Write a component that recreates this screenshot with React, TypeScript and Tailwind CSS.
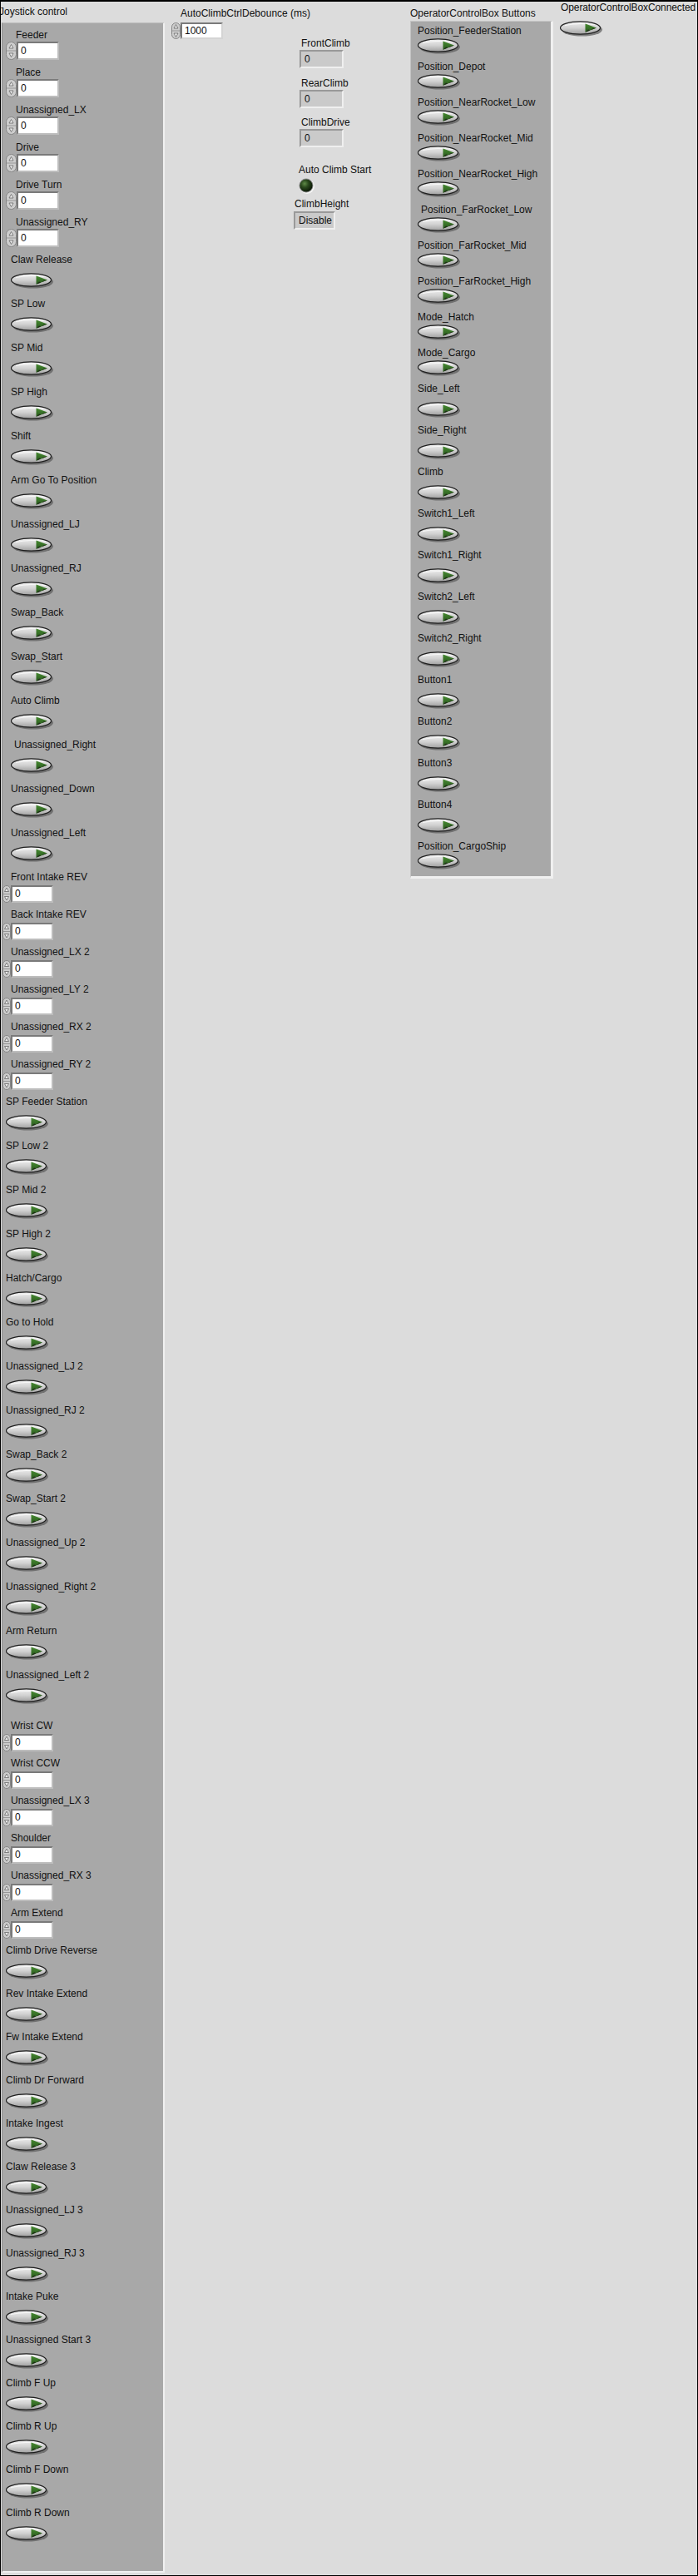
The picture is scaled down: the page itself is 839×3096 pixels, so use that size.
const g1 = ['Feeder', 'Place', 'Unassigned_LX', 'Drive', 'Drive Turn', 'Unassigned_RY'];
const g2 = ['Claw Release', 'SP Low', 'SP Mid', 'SP High', 'Shift', 'Arm Go To Position', 'Unassigned_LJ', 'Unassigned_RJ', 'Swap_Back', 'Swap_Start', 'Auto Climb', 'Unassigned_Right', 'Unassigned_Down', 'Unassigned_Left'];
const g3 = ['Front Intake REV', 'Back Intake REV', 'Unassigned_LX 2', 'Unassigned_LY 2', 'Unassigned_RX 2', 'Unassigned_RY 2'];
const g4 = ['SP Feeder Station', 'SP Low 2', 'SP Mid 2', 'SP High 2', 'Hatch/Cargo', 'Go to Hold', 'Unassigned_LJ 2', 'Unassigned_RJ 2', 'Swap_Back 2', 'Swap_Start 2', 'Unassigned_Up 2', 'Unassigned_Right 2', 'Arm Return', 'Unassigned_Left 2'];
const g5 = ['Wrist CW', 'Wrist CCW', 'Unassigned_LX 3', 'Shoulder', 'Unassigned_RX 3', 'Arm Extend'];
const g6 = ['Climb Drive Reverse', 'Rev Intake Extend', 'Fw Intake Extend', 'Climb Dr Forward', 'Intake Ingest', 'Claw Release 3', 'Unassigned_LJ 3', 'Unassigned_RJ 3', 'Intake Puke', 'Unassigned Start 3', 'Climb F Up', 'Climb R Up', 'Climb F Down', 'Climb R Down'];

const tight = ['Position_FeederStation', 'Position_Depot', 'Position_NearRocket_Low', 'Position_NearRocket_Mid', 'Position_NearRocket_High', 'Position_FarRocket_Low', 'Position_FarRocket_Mid', 'Position_FarRocket_High', 'Mode_Hatch', 'Mode_Cargo'];
const loose = ['Side_Left', 'Side_Right', 'Climb', 'Switch1_Left', 'Switch1_Right', 'Switch2_Left', 'Switch2_Right', 'Button1', 'Button2', 'Button3', 'Button4'];

// LabVIEW style OK button with green arrow
const PushBtn = () => (
    <svg width="52" height="19" viewBox="0 0 52 19" className="block">
        <defs>
            <linearGradient id="btnFill" x1="0" y1="0" x2="0" y2="1">
                <stop offset="0" stopColor="#f0f0f0" />
                <stop offset="0.5" stopColor="#d2d2d2" />
                <stop offset="1" stopColor="#a0a0a0" />
            </linearGradient>
            <linearGradient id="arrowFill" x1="0" y1="0" x2="0" y2="1">
                <stop offset="0" stopColor="#468a30" />
                <stop offset="1" stopColor="#2a5a1f" />
            </linearGradient>
        </defs>
        <ellipse cx="26.5" cy="10.6" rx="24.5" ry="8" fill="#5a5a5a" opacity="0.7" />
        <ellipse cx="24.5" cy="8.5" rx="24" ry="7.6" fill="url(#btnFill)" stroke="#1e1e1e" strokeWidth="1.2" />
        <path d="M6 5.6 Q24 1.9 42 4.6" fill="none" stroke="#ffffff" strokeWidth="0.9" opacity="0.8" />
        <path d="M30.5 3.4 L44 8.6 L30.5 13.8 Z" fill="url(#arrowFill)" />
        <path d="M30.5 13.8 L34 10.4 L36.5 11.5 L39.5 9.3 L44 8.6 L30.5 13.8 Z" fill="#1f2f17" />
    </svg>
);

const Spinner = ({ w, h }: { w: number; h: number }) => (
    <svg width={w} height={h} viewBox={`0 0 ${w} ${h}`} className="block">
        <rect x="0.5" y="0.5" width={w - 1} height={h - 1} rx={(w - 1) / 2} fill="#cdcdcd" stroke="#868686" />
        <line x1="1" y1={h / 2} x2={w - 1} y2={h / 2} stroke="#979797" />
        <path d={`M${w / 2 - 2.5} ${h / 2 - 3} L${w / 2} ${h / 2 - 7.5} L${w / 2 + 2.5} ${h / 2 - 3} Z`} fill="#ececec" stroke="#666666" strokeWidth="0.8" />
        <path d={`M${w / 2 - 2.5} ${h / 2 + 3} L${w / 2} ${h / 2 + 7.5} L${w / 2 + 2.5} ${h / 2 + 3} Z`} fill="#ececec" stroke="#666666" strokeWidth="0.8" />
    </svg>
);

const Label = ({ text, className }: { text: string; className?: string }) => (
    <div className={`h-[14px] leading-[14px] text-[12px] whitespace-nowrap text-[#111] ${className ?? ''}`}>{text}</div>
);

const NumTop = ({ label }: { label: string }) => (
    <div className="h-[45px] flex flex-col">
        <Label text={label} className="ml-[16px]" />
        <div className="mt-[1px] ml-[4px] flex items-center">
            <Spinner w={13} h={22} />
            <div className="w-[51px] h-[22px] bg-white border-2 border-t-[#7a7a7a] border-l-[#7a7a7a] border-r-[#bdbdbd] border-b-[#bdbdbd] pl-[3px] text-[12px] leading-[18px]">0</div>
        </div>
    </div>
);

const NumLow = ({ label }: { label: string }) => (
    <div className="h-[45px] flex flex-col">
        <Label text={label} className="ml-[10px]" />
        <div className="mt-[3px] flex items-center">
            <Spinner w={10} h={21} />
            <div className="w-[51px] h-[21px] bg-white border-2 border-t-[#7a7a7a] border-l-[#7a7a7a] border-r-[#bdbdbd] border-b-[#bdbdbd] pl-[3px] text-[12px] leading-[17px]">0</div>
        </div>
    </div>
);

const Indicator = ({ value, w }: { value: string; w: string }) => (
    <div className={`${w} h-[22px] bg-[#cacaca] border-2 border-t-[#999999] border-l-[#999999] border-r-[#efefef] border-b-[#efefef] pl-[4px] text-[12px] leading-[18px] text-[#111]`}>{value}</div>
);

export default function App() {
    return (
        <div className="w-[839px] h-[3096px] bg-[#dcdcdc] border border-t-2 border-black flex font-['Liberation_Sans',Arial,sans-serif] text-[#111] overflow-hidden">
            {/* Joystick cluster */}
            <div className="w-[197px] shrink-0 flex flex-col">
                <Label text="Joystick control" className="mt-[5px] -ml-[2px]" />
                <div className="mt-[6px] ml-[1px] w-[196px] h-[3065px] bg-[#a8a8a8] border-t border-l border-t-[#bdbdbd] border-l-[#8c8c8c] border-r-2 border-b-2 border-r-[#f0f0f0] border-b-[#f0f0f0] pt-[7px] flex flex-col">
                    {g1.map((l) => <NumTop key={l} label={l} />)}
                    {g2.map((l) => (
                        <div key={l} className="h-[53px] flex flex-col">
                            <Label text={l} className={l === 'Unassigned_Right' ? 'ml-[14px]' : 'ml-[10px]'} />
                            <div className="mt-[9px] ml-[10px]"><PushBtn /></div>
                        </div>
                    ))}
                    {g3.map((l) => <NumLow key={l} label={l} />)}
                    {g4.map((l, i) => (
                        <div key={l} className={`${i === g4.length - 1 ? 'h-[61px]' : 'h-[53px]'} flex flex-col`}>
                            <Label text={l} className="ml-[4px]" />
                            <div className="mt-[9px] ml-[4px]"><PushBtn /></div>
                        </div>
                    ))}
                    {g5.map((l) => <NumLow key={l} label={l} />)}
                    {g6.map((l) => (
                        <div key={l} className="h-[52px] flex flex-col">
                            <Label text={l} className="ml-[4px]" />
                            <div className="mt-[9px] ml-[4px]"><PushBtn /></div>
                        </div>
                    ))}
                </div>
            </div>

            {/* Climb controls */}
            <div className="w-[295px] shrink-0 flex flex-col">
                <Label text="AutoClimbCtrlDebounce (ms)" className="mt-[7px] ml-[19px]" />
                <div className="mt-[4px] ml-[8px] flex items-center">
                    <Spinner w={11} h={20} />
                    <div className="w-[51px] h-[20px] bg-white border-2 border-t-[#7a7a7a] border-l-[#7a7a7a] border-r-[#d4d4d4] border-b-[#d4d4d4] pl-[3px] text-[12px] leading-[16px]">1000</div>
                </div>
                <div className="-mt-[2px] ml-[155px] flex flex-col">
                    <Label text="FrontClimb" className="ml-[9px]" />
                    <div className="mt-[1px] ml-[7px]"><Indicator value="0" w="w-[53px]" /></div>
                    <Label text="RearClimb" className="mt-[11px] ml-[9px]" />
                    <div className="mt-[1px] ml-[7px]"><Indicator value="0" w="w-[53px]" /></div>
                    <Label text="ClimbDrive" className="mt-[10px] ml-[9px]" />
                    <div className="mt-[1px] ml-[7px]"><Indicator value="0" w="w-[53px]" /></div>
                    <Label text="Auto Climb Start" className="mt-[20px] ml-[6px]" />
                    <div className="mt-[3px] ml-[6px]">
                        <svg width="20" height="20" viewBox="0 0 20 20" className="block">
                            <defs>
                                <radialGradient id="led" cx="0.38" cy="0.35" r="0.65">
                                    <stop offset="0" stopColor="#5f8a48" />
                                    <stop offset="0.45" stopColor="#2b4a1e" />
                                    <stop offset="1" stopColor="#0c1a07" />
                                </radialGradient>
                            </defs>
                            <circle cx="10" cy="10" r="9" fill="#f4f4f4" />
                            <circle cx="9" cy="9" r="8.5" fill="#8a8a8a" />
                            <circle cx="9" cy="9" r="7.6" fill="url(#led)" />
                        </svg>
                    </div>
                    <Label text="ClimbHeight" className="mt-[4px] ml-[1px]" />
                    <div className="mt-[2px]"><Indicator value="Disable" w="w-[50px]" /></div>
                </div>
            </div>

            {/* Operator control box cluster */}
            <div className="w-[172px] shrink-0 flex flex-col">
                <Label text="OperatorControlBox Buttons" className="mt-[7px]" />
                <div className="mt-[2px] w-[172px] bg-[#a8a8a8] border-t border-l border-t-[#c4c4c4] border-l-[#c4c4c4] border-r-[3px] border-b-[3px] border-r-[#f0f0f0] border-b-[#f0f0f0] pt-[4px] pb-[8px] flex flex-col">
                    {tight.map((l) => (
                        <div key={l} className="h-[43px] flex flex-col">
                            <Label text={l} className={l === 'Position_FarRocket_Low' ? 'ml-[12px]' : 'ml-[8px]'} />
                            <div className="mt-[2px] ml-[8px]"><PushBtn /></div>
                        </div>
                    ))}
                    {loose.map((l) => (
                        <div key={l} className="h-[50px] flex flex-col">
                            <Label text={l} className="ml-[8px]" />
                            <div className="mt-[9px] ml-[8px]"><PushBtn /></div>
                        </div>
                    ))}
                    <div className="flex flex-col">
                        <Label text="Position_CargoShip" className="ml-[8px]" />
                        <div className="mt-[2px] ml-[8px]"><PushBtn /></div>
                    </div>
                </div>
            </div>

            {/* Connection status */}
            <div className="flex-1 flex flex-col">
                <Label text="OperatorControlBoxConnected" className="ml-[9px] tracking-[-0.1px]" />
                <div className="mt-[9px] ml-[8px]"><PushBtn /></div>
            </div>
        </div>
    );
}
